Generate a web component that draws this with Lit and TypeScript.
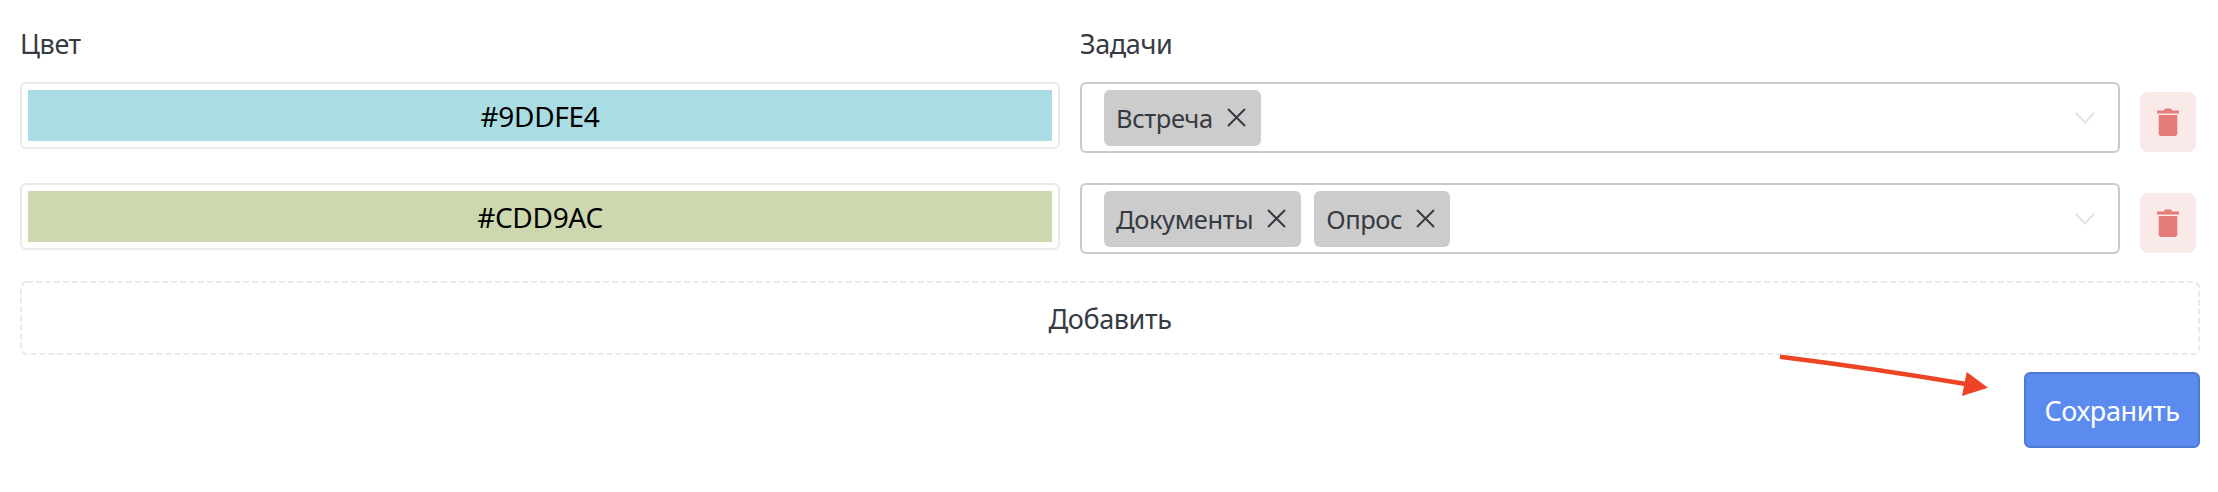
import { LitElement, html, css } from "lit";
import { customElement } from "lit/decorators.js";

const trash = html`<svg class="trash" viewBox="0 0 22 28" width="22" height="28" aria-hidden="true">
  <path d="M7 2.6 8 .6h6l1 2h7v2.8H0V2.600z" />
  <path d="M1.700 7h18.600v18.600a2.400 2.400 0 0 1-2.400 2.400H4.100a2.400 2.400 0 0 1-2.400-2.400z" />
</svg>`;

const cross = html`<svg class="x" viewBox="0 0 19 19" width="19" height="19" aria-hidden="true">
  <path d="M1 1 18 18M18 1 1 18" />
</svg>`;

const chevron = html`<svg class="chev" viewBox="0 0 20 12" width="20" height="12" aria-hidden="true">
  <path d="M.7.7 10 10.5 19.3.7" />
</svg>`;

@customElement("app-root")
export class AppRoot extends LitElement {
  static styles = css`
    :host {
      display: block;
      position: relative;
      width: 2218px;
      height: 492px;
      box-sizing: border-box;
      padding: 26px 18px 0 20px;
      background: #fff;
      font-family: "Noto Sans", "Open Sans", sans-serif;
      font-size: 27px;
      letter-spacing: -0.4px;
      color: #363b42;
    }
    .grid {
      display: grid;
      grid-template-columns: 1040px 1040px 56px;
      column-gap: 20px;
      align-items: start;
    }
    .label {
      height: 36px;
      line-height: 36px;
      margin-bottom: 20px;
    }
    .row {
      margin-bottom: 30px;
    }
    .color {
      box-sizing: border-box;
      height: 67px;
      border: 2px solid #eaeaea;
      border-radius: 6px;
      padding: 6px;
      display: flex;
    }
    .swatch {
      flex: 1;
      display: flex;
      align-items: center;
      justify-content: center;
      color: #000;
      font-size: 28px;
      letter-spacing: -0.3px;
    }
    .blue { background: #aadce3; }
    .green { background: #ced8ae; }
    .select {
      box-sizing: border-box;
      height: 71px;
      border: 2px solid #c9c9c9;
      border-radius: 6px;
      padding: 6px 22px;
      display: flex;
      align-items: flex-start;
      gap: 13px;
    }
    .tag {
      height: 56px;
      box-sizing: border-box;
      background: #cccccc;
      border-radius: 6px;
      padding: 0 15px 0 12px;
      display: flex;
      align-items: center;
      gap: 14px;
      font-size: 25.500px;
    }
    .x { fill: none; stroke: #363b42; stroke-width: 2; flex: none; margin-top: -2px; }
    .chev-wrap {
      margin-left: auto;
      margin-right: 1px;
      align-self: center;
      display: flex;
    }
    .chev { fill: none; stroke: #e4e4e6; stroke-width: 2; }
    .del {
      box-sizing: border-box;
      width: 56px;
      height: 60px;
      margin-top: 10px;
      border: 0;
      padding: 0;
      border-radius: 8px;
      background: #fae9e9;
      display: flex;
      align-items: center;
      justify-content: center;
    }
    .trash { fill: #e47b78; }
    .add {
      position: relative;
      box-sizing: border-box;
      height: 74px;
      margin-top: -3px;
      display: flex;
      align-items: center;
      justify-content: center;
    }
    .dash {
      position: absolute;
      inset: 0;
      fill: none;
      stroke: #eaeaea;
      stroke-width: 2;
      stroke-dasharray: 6 3;
    }
    .foot {
      display: flex;
      justify-content: flex-end;
      margin-top: 17px;
    }
    .save {
      box-sizing: border-box;
      width: 176px;
      height: 76px;
      padding: 0;
      border: 2px solid #4d78d6;
      border-radius: 6px;
      background: #5c8bf0;
      color: #fff;
      font: inherit;
      letter-spacing: inherit;
    }
    .arrow {
      position: absolute;
      left: 1770px;
      top: 350px;
    }
  `;

  private row(color: string, cls: string, tags: string[]) {
    return html`<div class="grid row">
      <div class="color"><div class="swatch ${cls}">${color}</div></div>
      <div class="select">
        ${tags.map((t) => html`<span class="tag">${t}${cross}</span>`)}
        <span class="chev-wrap">${chevron}</span>
      </div>
      <button class="del">${trash}</button>
    </div>`;
  }

  render() {
    return html`
      <div class="grid">
        <div class="label">Цвет</div>
        <div class="label">Задачи</div>
      </div>
      ${this.row("#9DDFE4", "blue", ["Встреча"])}
      ${this.row("#CDD9AC", "green", ["Документы", "Опрос"])}
      <div class="add">
        <svg class="dash" width="2180" height="74" viewBox="0 0 2180 74" aria-hidden="true">
          <rect x="1" y="1" width="2178" height="72" rx="6" />
        </svg>
        Добавить
      </div>
      <div class="foot"><button class="save">Сохранить</button></div>
      <svg class="arrow" width="230" height="60" viewBox="0 0 230 60" aria-hidden="true">
        <path d="M10 6.700Q103 18.300 196 34" fill="none" stroke="#ec4424" stroke-width="4.500" />
        <path d="M218 37.700 196.700 22 192 46z" fill="#ec4424" />
      </svg>
    `;
  }
}
